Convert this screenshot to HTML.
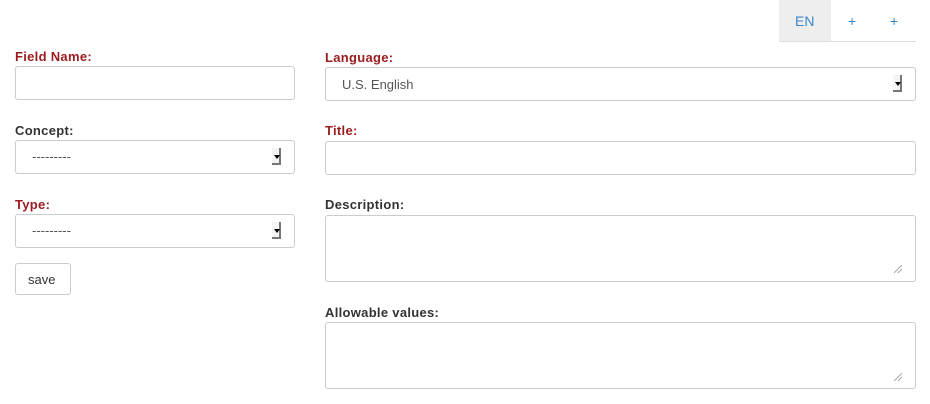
<!DOCTYPE html>
<html><head><style>
body{margin:0;width:930px;height:404px;background:#fff;font-family:"Liberation Sans",sans-serif;position:relative;overflow:hidden}
.a{position:absolute}
.l{font-weight:bold;font-size:13px;color:#333;letter-spacing:0.3px}
.r{color:#9b1c1f}
.box{position:absolute;border:1px solid #ccc;border-radius:3px;box-sizing:border-box;background:#fff}
.v{position:absolute;font-size:13px;color:#555}
.arr{position:absolute;width:9px;height:17px;border-right:2px solid #777;border-bottom:2px solid #777;box-sizing:border-box;background:#f4f4f4}
.arr:after{content:"";position:absolute;left:2px;top:7px;border-left:3px solid transparent;border-right:3px solid transparent;border-top:4px solid #000}
.rz{position:absolute;width:8px;height:8px;background:linear-gradient(135deg,transparent 45%,#aaa 45%,#aaa 55%,transparent 55%,transparent 70%,#aaa 70%,#aaa 80%,transparent 80%)}
</style></head><body>
<div class="a" style="left:779px;top:0;width:52px;height:41px;background:#eee"></div>
<div class="a" style="left:779px;top:41px;width:137px;height:1px;background:#ddd"></div>
<div class="a" style="left:795px;top:13px;font-size:14px;color:#3a87c8">EN</div>
<div class="a" style="left:848px;top:13px;font-size:14px;color:#3a87c8">+</div>
<div class="a" style="left:890px;top:13px;font-size:14px;color:#3a87c8">+</div>

<div class="a l r" style="left:15px;top:49px">Field Name:</div>
<div class="box" style="left:15px;top:66px;width:280px;height:34px"></div>
<div class="a l" style="left:15px;top:123px">Concept:</div>
<div class="box" style="left:15px;top:140px;width:280px;height:34px"></div>
<div class="v" style="left:32px;top:149px">---------</div>
<div class="arr" style="left:272px;top:148px"></div>
<div class="a l r" style="left:15px;top:197px">Type:</div>
<div class="box" style="left:15px;top:214px;width:280px;height:34px"></div>
<div class="v" style="left:32px;top:223px">---------</div>
<div class="arr" style="left:272px;top:222px"></div>
<div class="box" style="left:15px;top:263px;width:56px;height:32px"></div>
<div class="a" style="left:28px;top:272px;font-size:13px;color:#333">save</div>

<div class="a l r" style="left:325px;top:50px">Language:</div>
<div class="box" style="left:325px;top:67px;width:591px;height:34px"></div>
<div class="v" style="left:342px;top:77px">U.S. English</div>
<div class="arr" style="left:893px;top:75px"></div>
<div class="a l r" style="left:325px;top:123px">Title:</div>
<div class="box" style="left:325px;top:141px;width:591px;height:34px"></div>
<div class="a l" style="left:325px;top:197px">Description:</div>
<div class="box" style="left:325px;top:215px;width:591px;height:67px"></div>
<div class="rz" style="left:894px;top:265px"></div>
<div class="a l" style="left:325px;top:305px">Allowable values:</div>
<div class="box" style="left:325px;top:322px;width:591px;height:67px"></div>
<div class="rz" style="left:894px;top:373px"></div>
</body></html>
